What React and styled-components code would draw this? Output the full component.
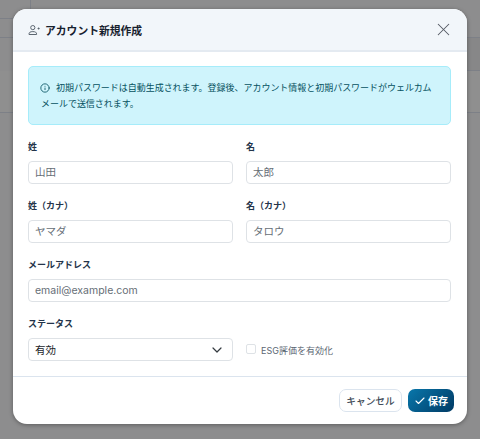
import styled, { createGlobalStyle } from "styled-components";
import { ChevronDown, Check, Info, X } from "lucide-react";

const GlobalStyle = createGlobalStyle`
  html, body {
    margin: 0;
    padding: 0;
    height: 100%;
    overflow: hidden;
    font-family: Inter, "Noto Sans CJK JP", sans-serif;
  }
  * {
    box-sizing: border-box;
  }
`;

const Page = styled.div`
  position: relative;
  width: 480px;
  height: 439px;
  background: #8d8d8e;
  overflow: hidden;
`;

const TableBehind = styled.div`
  display: flex;
  flex-direction: column;
`;

const BehindRow = styled.div`
  height: ${(p) => p.$h}px;
  width: ${(p) => p.$w || "100%"};
  align-self: ${(p) => p.$align || "stretch"};
  border-bottom: 1px solid #7d8087;
  background: ${(p) => p.$bg || "transparent"};
`;

const VerticalLine = styled.div`
  position: absolute;
  top: 0;
  left: 30px;
  width: 1px;
  height: 19px;
  background: #7d8087;
`;

const Overlay = styled.div`
  position: absolute;
  inset: 0;
  padding: 9px 13px 15px;
`;

const Dialog = styled.div`
  width: 454px;
  height: 415px;
  background: #fff;
  border-radius: 14px;
  overflow: hidden;
  display: flex;
  flex-direction: column;
  box-shadow: 0 1px 4px rgba(0, 0, 0, 0.35);
`;

const Header = styled.div`
  height: 43px;
  flex: none;
  display: flex;
  align-items: center;
  justify-content: space-between;
  padding: 0 13px 0 15px;
  background: #f2f6fa;
  border-bottom: 2px solid #e4eaf1;
`;

const Title = styled.h2`
  margin: 0;
  display: flex;
  align-items: center;
  gap: 5px;
  font-size: 10.8px;
  font-weight: 700;
  color: #17212e;
`;

const CloseButton = styled.button`
  border: none;
  background: none;
  padding: 0;
  display: flex;
  color: #555b63;
`;

const Body = styled.div`
  flex: 1;
  padding: 14px 16px 0 15px;
  display: flex;
  flex-direction: column;
`;

const Alert = styled.div`
  height: 59px;
  padding: 13px 12px 0;
  background: #cff4fc;
  border: 1px solid #a6ecfa;
  border-radius: 5px;
  font-size: 9px;
  line-height: 16px;
  letter-spacing: -0.03px;
  color: #055160;
  margin-bottom: 14px;
  svg {
    vertical-align: -1.5px;
    margin: 0 6px 0 -1px;
  }
`;

const Row = styled.div`
  display: grid;
  grid-template-columns: 205px 205px;
  column-gap: 13px;
`;

const Field = styled.div`
  margin-bottom: 14px;
`;

const Label = styled.label`
  display: block;
  height: 16px;
  margin-bottom: 6px;
  font-size: 9px;
  line-height: 16px;
  font-weight: 600;
  color: #24344a;
`;

const Input = styled.input`
  display: block;
  width: 100%;
  height: 23px;
  padding: 0 6px;
  border: 1px solid #dee2e6;
  border-radius: 4px;
  font: 10.5px Inter, "Noto Sans CJK JP", sans-serif;
  color: #212529;
  &::placeholder {
    color: #666e76;
    opacity: 1;
  }
`;

const SelectBox = styled.div`
  height: 23px;
  padding: 0 7px 0 6px;
  border: 1px solid #dee2e6;
  border-radius: 4px;
  display: flex;
  align-items: center;
  justify-content: space-between;
  font-size: 10.5px;
  color: #212529;
`;

const CheckLine = styled.div`
  height: 23px;
  margin-top: 22px;
  display: flex;
  align-items: center;
  gap: 5px;
  font-size: 9px;
  color: #5c6773;
`;

const CheckBox = styled.span`
  width: 10px;
  height: 10px;
  margin-bottom: 2px;
  border: 1px solid #dee2e6;
  border-radius: 2px;
  background: #fff;
`;

const CheckText = styled.span`
  padding-top: 1px;
`;

const Footer = styled.div`
  height: 48px;
  flex: none;
  border-top: 1px solid #dbe4ee;
  display: flex;
  align-items: center;
  justify-content: flex-end;
  gap: 6px;
  padding: 0 13px 0 0;
`;

const CancelButton = styled.button`
  width: 63px;
  height: 23px;
  padding: 0;
  background: #fff;
  border: 1px solid #dbe4ee;
  border-radius: 7px;
  font: 500 9.7px Inter, "Noto Sans CJK JP", sans-serif;
  color: #404a57;
`;

const SaveButton = styled.button`
  width: 46px;
  height: 23px;
  padding: 0 0 0 6px;
  border: none;
  border-radius: 7px;
  display: flex;
  align-items: center;
  gap: 2px;
  background: linear-gradient(135deg, #0877ab, #013a64);
  font: 600 10px Inter, "Noto Sans CJK JP", sans-serif;
  color: #fff;
`;

const UserAddIcon = () => (
  <svg width="12" height="12" viewBox="0 0 12 12" fill="none" stroke="#5c6670" strokeWidth="1">
    <circle cx="4.8" cy="3.6" r="2.1" />
    <path d="M1 10.5v-.6c0-1.5 1.3-2.3 3.8-2.3s3.8.8 3.8 2.3v.6z" />
    <path d="M9.6 4.5h2M10.6 3.5v2" />
  </svg>
);

const App = () => {
  return (
    <Page>
      <GlobalStyle />
      <TableBehind>
        <BehindRow $h={19} $w="14px" />
        <BehindRow $h={19} />
        <BehindRow $h={33} $w="14px" $align="flex-end" $bg="#878788" />
        <BehindRow $h={42} $bg="#8f8f8f" />
      </TableBehind>
      <VerticalLine />
      <Overlay>
        <Dialog>
          <Header>
            <Title>
              <UserAddIcon />
              アカウント新規作成
            </Title>
            <CloseButton>
              <X size={21} strokeWidth={1.2} />
            </CloseButton>
          </Header>
          <Body>
            <Alert>
              <Info size={10} />
              初期パスワードは自動生成されます。登録後、アカウント情報と初期パスワードがウェルカムメールで送信されます。
            </Alert>
            <Row>
              <Field>
                <Label>姓</Label>
                <Input placeholder="山田" />
              </Field>
              <Field>
                <Label>名</Label>
                <Input placeholder="太郎" />
              </Field>
            </Row>
            <Row>
              <Field>
                <Label>姓（カナ）</Label>
                <Input placeholder="ヤマダ" />
              </Field>
              <Field>
                <Label>名（カナ）</Label>
                <Input placeholder="タロウ" />
              </Field>
            </Row>
            <Field>
              <Label>メールアドレス</Label>
              <Input placeholder="email@example.com" />
            </Field>
            <Row>
              <Field>
                <Label>ステータス</Label>
                <SelectBox>
                  有効
                  <ChevronDown size={16} strokeWidth={1.8} color="#343a40" />
                </SelectBox>
              </Field>
              <CheckLine>
                <CheckBox />
                <CheckText>ESG評価を有効化</CheckText>
              </CheckLine>
            </Row>
          </Body>
          <Footer>
            <CancelButton>キャンセル</CancelButton>
            <SaveButton>
              <Check size={12} strokeWidth={2.2} />
              保存
            </SaveButton>
          </Footer>
        </Dialog>
      </Overlay>
    </Page>
  );
};

export default App;
